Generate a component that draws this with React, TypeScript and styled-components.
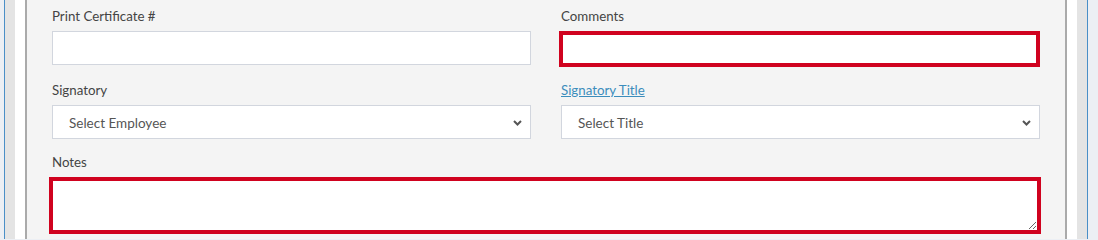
import React from "react";
import styled, { createGlobalStyle } from "styled-components";

const GlobalStyle = createGlobalStyle`
  html, body {
    margin: 0;
    padding: 0;
    background: #eceff4;
    font-family: Lato, "Liberation Sans", sans-serif;
    overflow: hidden;
  }
`;

const Page = styled.div`
  padding: 0 10px 0 4px;
  height: 239px;
  overflow: hidden;
`;

const Frame = styled.div`
  border-left: 1px solid #4a8fc7;
  border-right: 1px solid #4a8fc7;
  background: #e4e4e4;
  padding: 0 10px;
  height: 100%;
`;

const WhiteWrap = styled.div`
  background: #ffffff;
  padding: 0 10px;
  height: 100%;
`;

const Panel = styled.div`
  background: #f4f4f4;
  border-left: 2px solid #aaaaaa;
  border-right: 2px solid #aaaaaa;
  padding: 7px 25px 20px;
  min-height: 100%;
  box-sizing: border-box;
`;

const Row = styled.div`
  display: grid;
  grid-template-columns: 1fr 1fr;
  column-gap: 30px;
  margin-bottom: 14px;
`;

const Group = styled.div<{ $mt?: number }>`
  display: flex;
  flex-direction: column;
  margin-top: ${(p) => p.$mt ?? 0}px;
`;

const Label = styled.label<{ $link?: boolean }>`
  font-size: 13.3px;
  line-height: 18px;
  height: 18px;
  margin-bottom: 6px;
  color: ${(p) => (p.$link ? "#3c8dbc" : "#444444")};
  text-decoration: ${(p) => (p.$link ? "underline" : "none")};
  align-self: flex-start;
`;

const TextInput = styled.input<{ $error?: boolean }>`
  box-sizing: border-box;
  height: ${(p) => (p.$error ? 36 : 34)}px;
  width: ${(p) => (p.$error ? "calc(100% + 2px)" : "100%")};
  margin-left: ${(p) => (p.$error ? -2 : 0)}px;
  background: #ffffff;
  border: ${(p) => (p.$error ? "4px solid #d0021f" : "1px solid #d2d6de")};
  border-radius: 0;
  outline: none;
  padding: 0 12px;
  font-family: inherit;
  font-size: 14px;
`;

const SelectWrap = styled.div`
  position: relative;
  height: 34px;
`;

const Select = styled.select`
  box-sizing: border-box;
  appearance: none;
  -webkit-appearance: none;
  width: 100%;
  height: 34px;
  background: #ffffff;
  border: 1px solid #d2d6de;
  border-radius: 0;
  outline: none;
  padding: 1px 30px 0 16px;
  font-family: inherit;
  font-size: 13.5px;
  color: #555555;
`;

const Chevron = styled.svg`
  position: absolute;
  right: 9px;
  top: 15px;
  width: 9px;
  height: 6px;
  pointer-events: none;
`;

const NotesArea = styled.textarea`
  box-sizing: border-box;
  display: block;
  width: calc(100% + 4px);
  margin-left: -3px;
  height: 57px;
  background: #ffffff;
  border: 4px solid #d0021f;
  border-radius: 0;
  outline: none;
  padding: 6px 12px;
  font-family: inherit;
  font-size: 14px;
`;

const ChevronIcon = () => (
  <Chevron viewBox="0 0 9 6">
    <path d="M1 1 L4.5 4.5 L8 1" fill="none" stroke="#555" strokeWidth="2" />
  </Chevron>
);

export default function App() {
  return (
    <>
      <GlobalStyle />
      <Page>
        <Frame>
          <WhiteWrap>
            <Panel>
              <Row>
                <Group>
                  <Label>Print Certificate #</Label>
                  <TextInput type="text" />
                </Group>
                <Group>
                  <Label>Comments</Label>
                  <TextInput type="text" $error />
                </Group>
              </Row>
              <Row>
                <Group>
                  <Label>Signatory</Label>
                  <SelectWrap>
                    <Select defaultValue="">
                      <option value="">Select Employee</option>
                    </Select>
                    <ChevronIcon />
                  </SelectWrap>
                </Group>
                <Group>
                  <Label $link>Signatory Title</Label>
                  <SelectWrap>
                    <Select defaultValue="">
                      <option value="">Select Title</option>
                    </Select>
                    <ChevronIcon />
                  </SelectWrap>
                </Group>
              </Row>
              <Group $mt={1}>
                <Label>Notes</Label>
                <NotesArea />
              </Group>
            </Panel>
          </WhiteWrap>
        </Frame>
      </Page>
    </>
  );
}
